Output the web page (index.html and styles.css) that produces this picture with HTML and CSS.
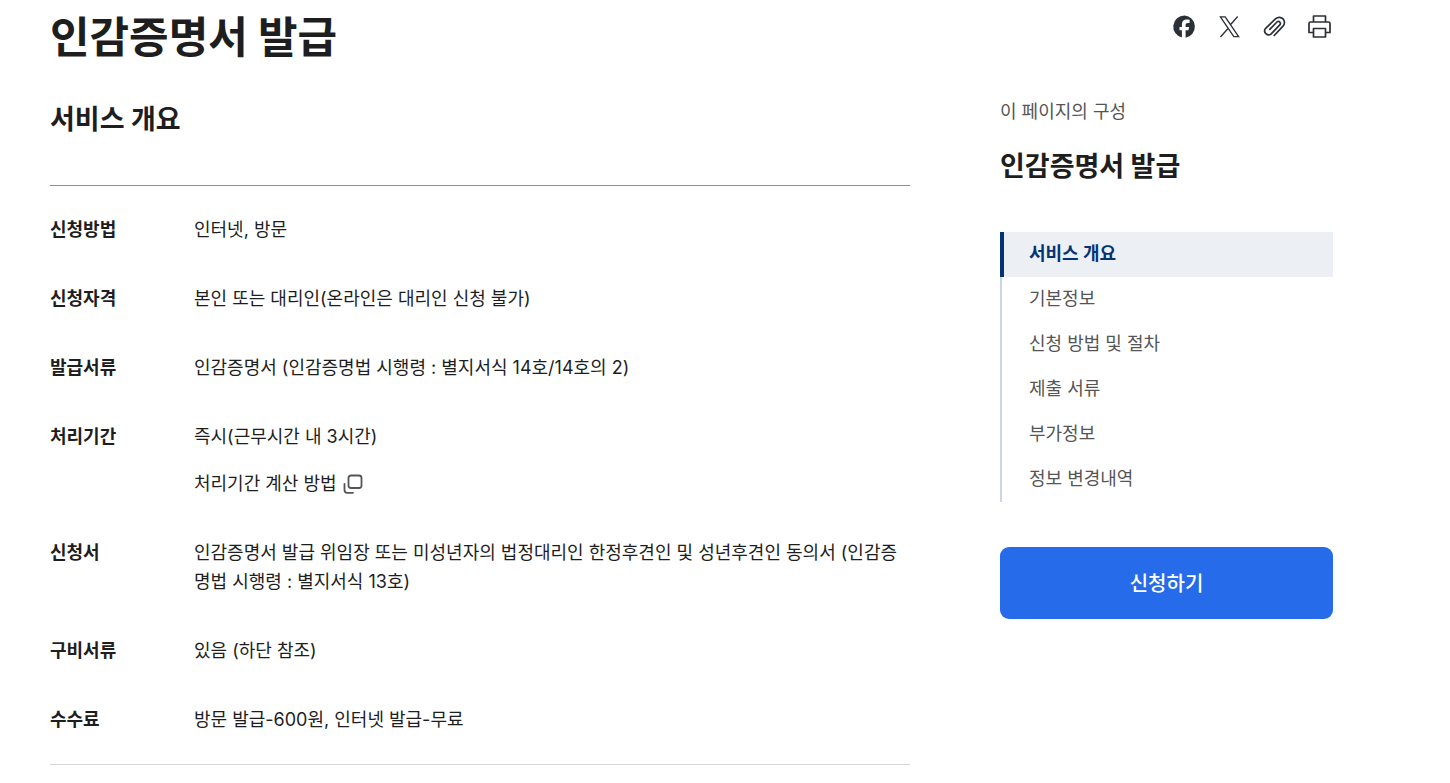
FILE: index.html
```
<!DOCTYPE html>
<html lang="ko">
<head>
    <meta charset="UTF-8">
    <meta name="viewport" content="width=device-width, initial-scale=1.0">
    <title>인감증명서 발급</title>
    <link rel="stylesheet" href="styles.css">
</head>
<body>
    <div class="container">
        <header class="page-header">
            <h1>인감증명서 발급</h1>
            <div class="share">
                <button type="button" class="share-btn" aria-label="페이스북 공유">
                    <svg width="24" height="24" viewBox="0 0 24 24"><path fill="#2b2f36" d="M12.500 .5a11.200 11.200 0 0 0-2.600 22.100V15.200H7.500v-3.300h2.400V10c0-3.800 1.700-5.500 5.300-5.500.7 0 1.900.1 2.400.3v3.100h-1.500c-1.900 0-2.500.7-2.500 2.500v1.500h3.500l-.6 3.300h-2.900v7.500A11.200 11.200 0 0 0 12.500 .5z"/></svg>
                </button>
                <button type="button" class="share-btn" aria-label="X 공유">
                    <svg width="24" height="24" viewBox="0 0 24 24" fill="none" stroke="#2b2f36" stroke-width="1.300"><path d="M3.400 1.900h4.800L21.600 21.600h-4.800zM20.700 1.500l-7.700 8.800M11.300 13.200 3.400 22"/></svg>
                </button>
                <button type="button" class="share-btn" aria-label="링크 복사">
                    <svg width="24" height="24" viewBox="0 0 24 24" fill="none" stroke="#2b2f36" stroke-width="1.700" stroke-linecap="round" stroke-linejoin="round"><path d="M12.200 20.500 20.800 11.300A5 5 0 0 0 13.700 3.700L3.700 13.300A3.900 3.900 0 0 0 9.200 18.800L17.800 9.900A2 2 0 0 0 14.900 7L7.800 14.300"/></svg>
                </button>
                <button type="button" class="share-btn" aria-label="인쇄">
                    <svg width="24" height="24" viewBox="0 0 24 24" fill="none" stroke="#2b2f36" stroke-width="1.700" stroke-linejoin="round"><path d="M6.500 7V1h12v6M6.500 17.500H2V8.500A1.500 1.500 0 0 1 3.500 7h18A1.500 1.500 0 0 1 23 8.500v9h-4.500M6.500 13.500h12v8.500h-12z"/></svg>
                </button>
            </div>
        </header>

        <div class="content">
            <main>
                <h2>서비스 개요</h2>
                <dl class="info">
                    <div class="info-row">
                        <dt>신청방법</dt>
                        <dd>인터넷, 방문</dd>
                    </div>
                    <div class="info-row">
                        <dt>신청자격</dt>
                        <dd>본인 또는 대리인(온라인은 대리인 신청 불가)</dd>
                    </div>
                    <div class="info-row">
                        <dt>발급서류</dt>
                        <dd>인감증명서 (인감증명법 시행령 : 별지서식 14호/14호의 2)</dd>
                    </div>
                    <div class="info-row">
                        <dt>처리기간</dt>
                        <dd>
                            <p>즉시(근무시간 내 3시간)</p>
                            <a href="#" class="popup-link">처리기간 계산 방법
                                <svg width="20" height="20" viewBox="0 0 20 20" fill="none" stroke="#555" stroke-width="1.800" stroke-linecap="round"><rect x="5.500" y="1.500" width="13" height="12.500" rx="2.500"/><path d="M1.500 10v6a2.800 2.800 0 0 0 2.800 2.800H10"/></svg>
                            </a>
                        </dd>
                    </div>
                    <div class="info-row">
                        <dt>신청서</dt>
                        <dd>인감증명서 발급 위임장 또는 미성년자의 법정대리인 한정후견인 및 성년후견인 동의서 (인감증명법 시행령 : 별지서식 13호)</dd>
                    </div>
                    <div class="info-row">
                        <dt>구비서류</dt>
                        <dd>있음 (하단 참조)</dd>
                    </div>
                    <div class="info-row">
                        <dt>수수료</dt>
                        <dd>방문 발급-600원, 인터넷 발급-무료</dd>
                    </div>
                </dl>
            </main>

            <aside>
                <p class="side-label">이 페이지의 구성</p>
                <h2>인감증명서 발급</h2>
                <nav class="side-nav">
                    <a href="#" class="active">서비스 개요</a>
                    <a href="#">기본정보</a>
                    <a href="#">신청 방법 및 절차</a>
                    <a href="#">제출 서류</a>
                    <a href="#">부가정보</a>
                    <a href="#">정보 변경내역</a>
                </nav>
                <button type="button" class="apply-btn">신청하기</button>
            </aside>
        </div>
    </div>
</body>
</html>
```
FILE: styles.css
```
* {
    box-sizing: border-box;
}
body {
    margin: 0;
    background-color: #fff;
    color: #1e1e1e;
    font-family: Inter, "Noto Sans CJK KR", sans-serif;
    font-size: 18px;
    line-height: 29px;
}
h1, h2, p, dl, dd {
    margin: 0;
}
h1 {
    font-size: 43px;
    line-height: 62px;
}
h2 {
    font-size: 27px;
    line-height: 46px;
}
a {
    color: inherit;
    text-decoration: none;
}
button {
    border: 0;
    font-family: inherit;
    cursor: pointer;
}
.container {
    padding: 6px 117px 18px 50px;
}
.page-header {
    display: flex;
    justify-content: space-between;
    align-items: flex-start;
    margin-bottom: 29px;
}
.share {
    display: flex;
    gap: 17px;
    padding-top: 7px;
}
.share-btn {
    display: flex;
    justify-content: center;
    align-items: center;
    width: 28px;
    height: 28px;
    padding: 0;
    background: none;
}
.content {
    display: grid;
    grid-template-columns: 1fr 333px;
    gap: 90px;
    align-items: start;
}
.info {
    display: flex;
    flex-direction: column;
    gap: 40px;
    margin-top: 42px;
    padding: 29px 0 30px;
    border-top: 1px solid #8e8e8e;
    border-bottom: 1px solid #d8d8d8;
}
.info-row {
    display: grid;
    grid-template-columns: 144px 1fr;
}
.info dt {
    font-weight: 700;
}
.popup-link {
    display: flex;
    align-items: center;
    gap: 6px;
    margin-top: 18px;
}
.side-label {
    margin-bottom: 18px;
    color: #555;
}
.side-nav {
    margin: 42px 0 45px;
}
.side-nav a {
    display: block;
    padding: 7px 27px 9px;
    border-left: 2px solid #cdd6e2;
    color: #555;
}
.side-nav .active {
    padding-left: 25px;
    border-left: 4px solid #063374;
    background-color: #ecf0f5;
    color: #063374;
    font-weight: 700;
}
.apply-btn {
    width: 100%;
    height: 72px;
    padding: 0 0 2px;
    border-radius: 9px;
    background-color: #256bea;
    color: #fff;
    font-size: 20px;
    font-weight: 500;
}
```
